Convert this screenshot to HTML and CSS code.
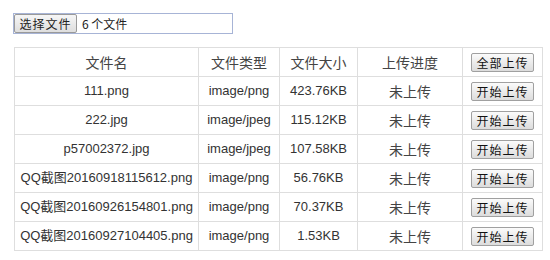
FILE: index.html
```html
<!DOCTYPE html>
<html lang="zh-CN">
<head>
<meta charset="UTF-8">
<title>文件上传</title>
<link rel="stylesheet" href="styles.css">
</head>
<body>
<div class="page">
  <div class="picker">
    <button class="pick-btn">选择文件</button>
    <span class="pick-text">6 个文件</span>
  </div>

  <table class="files">
    <colgroup>
      <col class="c-name">
      <col class="c-type">
      <col class="c-size">
      <col class="c-state">
      <col class="c-act">
    </colgroup>
    <tr>
      <th>文件名</th>
      <th>文件类型</th>
      <th>文件大小</th>
      <th>上传进度</th>
      <th><button class="up">全部上传</button></th>
    </tr>
    <tr>
      <td>111.png</td><td>image/png</td><td>423.76KB</td>
      <td class="cn">未上传</td><td><button class="up">开始上传</button></td>
    </tr>
    <tr>
      <td>222.jpg</td><td>image/jpeg</td><td>115.12KB</td>
      <td class="cn">未上传</td><td><button class="up">开始上传</button></td>
    </tr>
    <tr>
      <td>p57002372.jpg</td><td>image/jpeg</td><td>107.58KB</td>
      <td class="cn">未上传</td><td><button class="up">开始上传</button></td>
    </tr>
    <tr>
      <td>QQ截图20160918115612.png</td><td>image/png</td><td>56.76KB</td>
      <td class="cn">未上传</td><td><button class="up">开始上传</button></td>
    </tr>
    <tr>
      <td>QQ截图20160926154801.png</td><td>image/png</td><td>70.37KB</td>
      <td class="cn">未上传</td><td><button class="up">开始上传</button></td>
    </tr>
    <tr>
      <td>QQ截图20160927104405.png</td><td>image/png</td><td>1.53KB</td>
      <td class="cn">未上传</td><td><button class="up">开始上传</button></td>
    </tr>
  </table>
</div>
</body>
</html>
```

FILE: styles.css
```css
body {
    margin: 0;
    background: #fff;
    color: #333;
    font-family: "Liberation Sans", "Noto Sans CJK SC", sans-serif;
    font-size: 13px;
}

.page {
    padding: 13px 14px;
}

/* fake file input */
.picker {
    display: flex;
    align-items: stretch;
    width: 218px;
    height: 19px;
    border: 1px solid #a7b4d6;
    margin-left: -1px;
}

.pick-btn {
    width: 63px;
    margin: 0;
    padding: 0;
    border: 1px solid #9a9a9a;
    border-radius: 2px;
    background: linear-gradient(#f6f6f6, #dedede);
    font-family: "Noto Sans CJK SC", sans-serif;
    font-size: 12px;
    color: #222;
    letter-spacing: 1px;
}

.pick-text {
    padding-left: 5px;
    line-height: 19px;
    font-family: "Noto Sans CJK SC", sans-serif;
    font-size: 12px;
    color: #222;
}

.files {
    margin-top: 13px;
    border-collapse: collapse;
    table-layout: fixed;
    width: 528px;
}

.c-name { width: 184px; }
.c-type { width: 81px; }
.c-size { width: 78px; }
.c-state { width: 105px; }
.c-act { width: 80px; }

.files th,
.files td {
    border: 1px solid #dedede;
    padding: 4px 5px;
    height: 20px;
    line-height: 20px;
    text-align: center;
    white-space: nowrap;
    font-weight: normal;
}

.files th,
.files td.cn {
    font-family: "Noto Sans CJK SC", sans-serif;
    font-size: 14px;
    color: #444;
}

.up {
    display: block;
    margin: 0 auto;
    width: 63px;
    height: 19px;
    padding: 0;
    border: 1px solid #a0a0a0;
    border-radius: 2px;
    background: linear-gradient(#fbfbfb, #dcdcdc);
    font-family: "Noto Sans CJK SC", sans-serif;
    font-size: 12px;
    line-height: 17px;
    color: #111;
    letter-spacing: 1px;
}
```
